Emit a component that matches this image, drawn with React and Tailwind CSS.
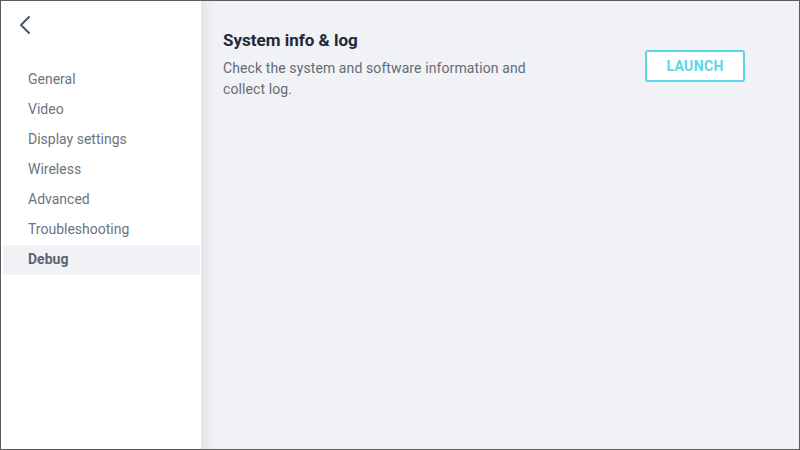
import { ChevronLeft } from 'lucide-react'

const navItems = [
  'General',
  'Video',
  'Display settings',
  'Wireless',
  'Advanced',
  'Troubleshooting',
  'Debug',
]

export default function App() {
  const active = 'Debug'

  return (
    <div
      className="w-[800px] h-[450px] flex border border-[#5a5a5a] bg-[#f1f2f6] overflow-hidden"
      style={{ fontFamily: 'Roboto, "Noto Sans", sans-serif' }}
    >
      {/* Sidebar */}
      <aside className="w-[200px] shrink-0 bg-white flex flex-col pl-[2px] pr-px relative z-10">
        <button className="ml-[6px] mt-[8px] w-[32px] h-[32px] flex items-center text-[#4a5568]">
          <ChevronLeft size={32} strokeWidth={1.5} />
        </button>
        <nav className="mt-[24px] flex flex-col">
          {navItems.map(item => (
            <div
              key={item}
              className={`h-[30px] flex items-center pl-[25px] pb-px text-[14px] ${
                item === active
                  ? 'bg-[#f1f2f6] font-bold text-[#5c6672]'
                  : 'text-[#6b7480]'
              }`}
            >
              {item}
            </div>
          ))}
        </nav>
      </aside>

      {/* Content */}
      <main className="flex-1 relative pl-[22px] pt-[28px] pr-[54px]">
        <div className="absolute left-0 top-0 bottom-0 w-[14px] bg-gradient-to-r from-[#e3e5ea] to-transparent" />
        <div className="flex items-start justify-between">
          <div className="w-[330px]">
            <h2 className="text-[17px] font-bold text-[#1f2937] leading-[22px]">System info &amp; log</h2>
            <p className="mt-[7px] text-[14px] leading-[21px] text-[#646c76] tracking-[0.1px]">
              Check the system and software information and collect log.
            </p>
          </div>
          <button className="mt-[21px] ml-px w-[100px] h-[32px] bg-white border-2 border-[#5bd6ea] rounded-[3px] text-[14px] font-bold text-[#5bd6ea] tracking-wide">
            LAUNCH
          </button>
        </div>
      </main>
    </div>
  )
}
